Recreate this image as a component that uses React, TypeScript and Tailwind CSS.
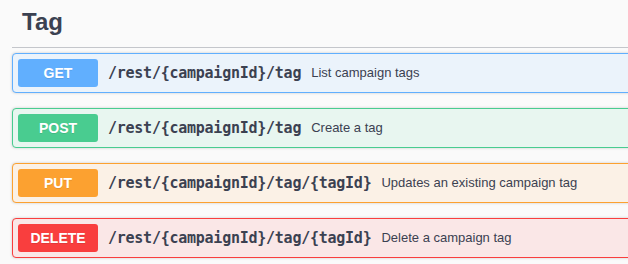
const ops = [
  {
    method: 'GET',
    path: '/rest/{campaignId}/tag',
    desc: 'List campaign tags',
    box: 'border-[#61affe] bg-[#ebf3fb]',
    badge: 'bg-[#61affe]',
  },
  {
    method: 'POST',
    path: '/rest/{campaignId}/tag',
    desc: 'Create a tag',
    box: 'border-[#49cc90] bg-[#e8f6f0]',
    badge: 'bg-[#49cc90]',
  },
  {
    method: 'PUT',
    path: '/rest/{campaignId}/tag/{tagId}',
    desc: 'Updates an existing campaign tag',
    box: 'border-[#fca130] bg-[#fbf1e6]',
    badge: 'bg-[#fca130]',
  },
  {
    method: 'DELETE',
    path: '/rest/{campaignId}/tag/{tagId}',
    desc: 'Delete a campaign tag',
    box: 'border-[#f93e3e] bg-[#fae7e7]',
    badge: 'bg-[#f93e3e]',
  },
];

export default function App() {
  return (
    <div className="w-[628px] h-[264px] overflow-hidden bg-[#fafafa] text-[#3b4151] font-['Liberation_Sans',Arial,sans-serif]">
      <div className="ml-3 w-[700px]">
        {/* Tag header */}
        <h4 className="h-[48px] pl-[10px] pt-[8px] text-[24px] leading-[28px] font-bold border-b border-[#c4c6cb]">
          Tag
        </h4>

        {/* Operations */}
        <div className="mt-[5px] flex flex-col gap-[15px]">
          {ops.map((op) => (
            <div
              key={op.method}
              className={`flex items-center gap-[10px] p-[5px] border rounded-[4px] shadow-[0_0_3px_rgba(0,0,0,0.19)] ${op.box}`}
            >
              <span
                className={`w-[80px] h-[28px] flex items-center justify-center rounded-[3px] text-white text-[14px] font-bold [text-shadow:0_1px_0_rgba(0,0,0,0.1)] ${op.badge}`}
              >
                {op.method}
              </span>
              <span className="font-['DejaVu_Sans_Mono',monospace] font-bold text-[15px] tracking-[-0.25px] text-[#3b4151]">
                {op.path}
              </span>
              <span className="text-[13px] text-[#3b4151]">{op.desc}</span>
            </div>
          ))}
        </div>
      </div>
    </div>
  );
}
